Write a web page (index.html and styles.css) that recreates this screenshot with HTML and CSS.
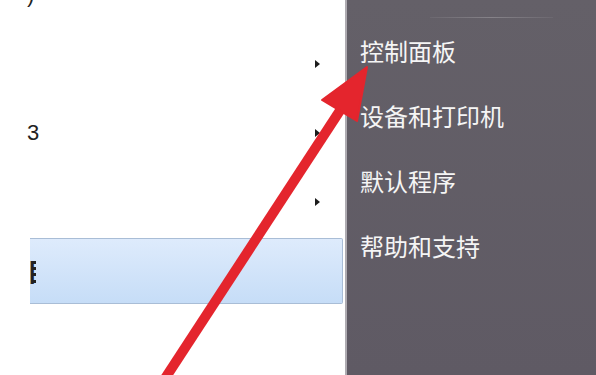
FILE: index.html
```html
<!DOCTYPE html>
<html lang="zh-CN">
<head>
    <meta charset="UTF-8">
    <meta name="viewport" content="width=device-width, initial-scale=1.0">
    <title>开始菜单</title>
    <link rel="stylesheet" href="styles.css">
</head>
<body>

    <div class="menu">
        <!-- 左侧：程序列表 -->
        <div class="programs">
            <div class="row"><span class="cut">)</span></div>
            <div class="row"><span class="cut"></span><span class="sub"></span></div>
            <div class="row"><span class="cut">3</span><span class="sub"></span></div>
            <div class="row"><span class="cut"></span><span class="sub"></span></div>
            <div class="row active"><span class="cut clip">目</span></div>
        </div>

        <!-- 右侧：系统链接 -->
        <div class="links">
            <div class="sep"></div>
            <div class="link">控制面板</div>
            <div class="link">设备和打印机</div>
            <div class="link">默认程序</div>
            <div class="link">帮助和支持</div>
        </div>
    </div>

    <!-- 红色箭头标注 -->
    <svg class="arrow" width="596" height="375" viewBox="0 0 596 375">
        <line x1="164" y1="380" x2="341" y2="109" stroke="#e4252d" stroke-width="10"/>
        <polygon points="367,67 322,100 357,121" fill="#e4252d" stroke="#e4252d" stroke-width="2" stroke-linejoin="round"/>
    </svg>

</body>
</html>
```

FILE: styles.css
```css
/* Stili di base */
body {
    margin: 0;
    padding: 0;
    background-color: #fff;
    font-family: "Noto Sans CJK SC", "Liberation Sans", sans-serif;
    overflow: hidden;
}

.menu {
    display: flex;
    width: 596px;
    height: 375px;
}

/* pannello sinistro */
.programs {
    width: 343px;
    padding-right: 2px;
    background-color: #fff;
    margin-top: -38px;
    display: flex;
    flex-direction: column;
    gap: 3px;
}

.row {
    height: 66px;
    margin-left: 30px;
    display: flex;
    align-items: center;
    justify-content: space-between;
    padding-right: 23px;
    box-sizing: border-box;
    font-size: 22px;
    color: #222;
}

.row .cut {
    margin-left: -3px;
    font-family: "Liberation Sans", sans-serif;
    line-height: 1;
}

.row .clip {
    display: inline-block;
    width: 9px;
    overflow: hidden;
    font-family: "Noto Sans CJK SC", sans-serif;
    font-weight: bold;
    font-size: 26px;
}

.sub {
    width: 0;
    height: 0;
    border-left: 5px solid #1c1c1c;
    border-top: 4px solid transparent;
    border-bottom: 4px solid transparent;
}

.row.active {
    background: linear-gradient(#deebfc, #c6ddf7);
    border: 1px solid #a9bdd6;
    border-left: none;
    border-radius: 0 2px 2px 0;
}

/* pannello destro */
.links {
    flex: 1;
    background: linear-gradient(#646068, #5f5a64);
    border-left: 2px solid #aeabb1;
    padding-top: 17px;
}

.sep {
    height: 1px;
    width: 123px;
    margin-left: 83px;
    background: linear-gradient(90deg, rgba(255,255,255,0.05), rgba(255,255,255,0.22), rgba(255,255,255,0.05));
}

.link {
    height: 65px;
    display: flex;
    align-items: center;
    padding-left: 13px;
    font-size: 24px;
    color: #f5f5f5;
}

.arrow {
    position: absolute;
    top: 0;
    left: 0;
    pointer-events: none;
}
```
